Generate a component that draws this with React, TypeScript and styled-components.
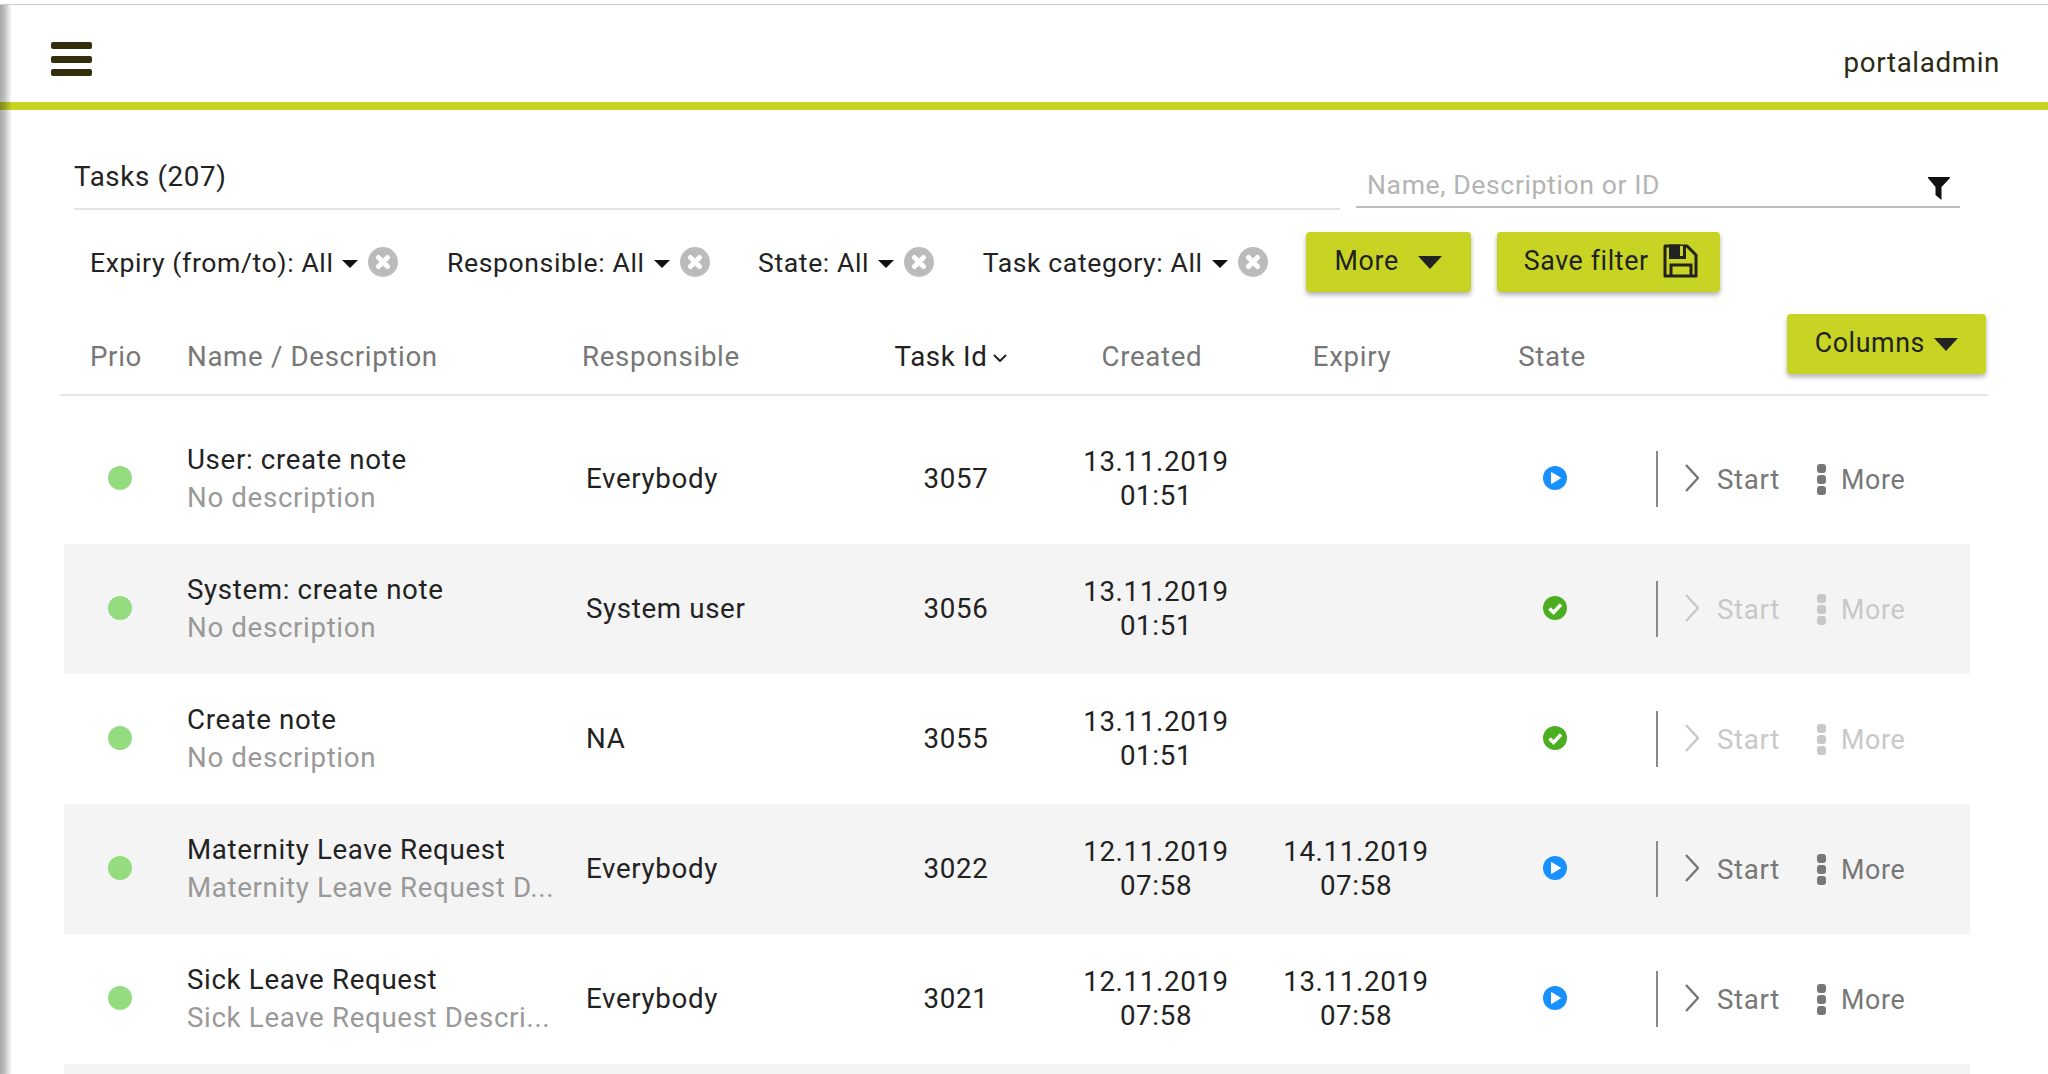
import styled, { createGlobalStyle } from "styled-components"

const GlobalStyle = createGlobalStyle`
  html, body {
    margin: 0;
    padding: 0;
    background: #fff;
    font-family: Roboto, "Liberation Sans", sans-serif;
    color: #222;
  }
`

const Page = styled.div`
  position: relative;
  height: 1074px;
  overflow: hidden;
  &::before {
    content: "";
    position: absolute;
    top: 5px;
    bottom: 0;
    left: 0;
    width: 12px;
    background: linear-gradient(90deg, rgba(0, 0, 0, 0.34), rgba(0, 0, 0, 0.26) 35%, rgba(0, 0, 0, 0));
  }
`

const Header = styled.header`
  display: flex;
  align-items: center;
  justify-content: space-between;
  box-sizing: border-box;
  height: 106px;
  margin-top: 4px;
  padding: 0 48px 0 51px;
  border-top: 1px solid #ccc;
  border-bottom: 8px solid #c8d424;
`

const Burger = styled.div`
  display: flex;
  flex-direction: column;
  gap: 6.5px;
  width: 41px;
  margin-top: 11px;
  span {
    height: 7px;
    border-radius: 2px;
    background: #332f0d;
  }
`

const UserName = styled.div`
  margin-top: 17px;
  font-size: 27.7px;
  letter-spacing: 0.65px;
  color: #2b2a12;
`

const TitleRow = styled.div`
  display: flex;
  gap: 16px;
  margin: 40px 88px 0 74px;
`

const Title = styled.div`
  flex: 1;
  box-sizing: border-box;
  height: 60px;
  font-size: 27.7px;
  line-height: 54px;
  letter-spacing: 0.65px;
  border-bottom: 2px solid #e4e4e4;
`

const Search = styled.div`
  display: flex;
  justify-content: space-between;
  box-sizing: border-box;
  width: 604px;
  height: 58px;
  padding: 20px 10px 0 11px;
  border-bottom: 2px solid #bbb;
  font-size: 26.6px;
  line-height: 30px;
  letter-spacing: 0.6px;
  color: #b4b4b4;
  svg {
    margin-top: 7px;
  }
`

const FilterBar = styled.div`
  display: flex;
  align-items: center;
  height: 60px;
  margin: 22px 0 0 90px;
`

const FilterList = styled.div`
  display: flex;
  align-items: center;
  gap: 48.5px;
  margin-right: 38px;
`

const Filter = styled.div`
  display: flex;
  align-items: center;
  font-size: 26.6px;
  letter-spacing: 0.6px;
`

const SmallCaret = styled.span`
  width: 0;
  height: 0;
  margin: 3px 10px 0 9px;
  border-left: 8px solid transparent;
  border-right: 8px solid transparent;
  border-top: 8px solid #111;
`

const Button = styled.button<{ $gap: number; $pad: number }>`
  display: inline-flex;
  align-items: center;
  gap: ${p => p.$gap}px;
  box-sizing: border-box;
  height: 60px;
  padding: 0 ${p => p.$pad}px 3px;
  border: 0;
  border-radius: 4px;
  background: #c8d424;
  box-shadow: 0 3px 5px rgba(0, 0, 0, 0.3);
  font: inherit;
  font-size: 26.8px;
  letter-spacing: 0.6px;
  color: #222;
`

const ButtonCaret = styled.span`
  width: 0;
  height: 0;
  margin-top: 4px;
  border-left: 12px solid transparent;
  border-right: 12px solid transparent;
  border-top: 13px solid #222;
`

const SaveButton = styled(Button)`
  margin-left: 26px;
  padding-right: 22px;
`

const Table = styled.div`
  margin: 22px 60px 0;
`

const HeadRow = styled.div`
  display: grid;
  grid-template-columns: 127px 395px 269px 200px 200px 200px 200px 1fr;
  box-sizing: border-box;
  height: 82px;
  border-bottom: 2px solid #e6e6e6;
`

const HeadCell = styled.div<{ $center?: boolean; $active?: boolean; $pad?: number }>`
  padding-top: 28px;
  padding-left: ${p => p.$pad ?? 0}px;
  font-size: 27.7px;
  line-height: 30px;
  letter-spacing: 0.65px;
  text-align: ${p => (p.$center ? "center" : "left")};
  color: ${p => (p.$active ? "#222" : "#777")};
  svg {
    margin-left: 6px;
    vertical-align: 4px;
  }
`

const ColumnsCell = styled.div`
  display: flex;
  justify-content: flex-end;
  padding-right: 2px;
`

const Rows = styled.div`
  width: 1906px;
  margin: 18px 0 0 4px;
`

const Row = styled.div<{ $striped: boolean }>`
  display: grid;
  grid-template-columns: 123px 399px 269px 200px 200px 200px 200px 1fr;
  align-items: center;
  height: 130px;
  background: ${p => (p.$striped ? "#f4f4f4" : "#fff")};
  font-size: 27.7px;
  letter-spacing: 0.65px;
`

const PrioDot = styled.span`
  display: block;
  width: 24px;
  height: 24px;
  margin: -2px 0 0 44px;
  border-radius: 50%;
  background: #95dc80;
`

const NameCell = styled.div`
  min-width: 0;
  line-height: 38px;
`

const RowName = styled.div`
  white-space: nowrap;
`

const RowDesc = styled.div`
  white-space: nowrap;
  color: #999;
`

const RespCell = styled.div`
  margin-top: -2px;
`

const CenterCell = styled.div`
  display: flex;
  justify-content: center;
  padding-left: 2px;
  text-align: center;
  line-height: 34px;
`

const StateCell = styled(CenterCell)`
  padding-left: 0;
  svg {
    margin-top: -2px;
  }
`

const Actions = styled.div<{ $disabled: boolean }>`
  display: flex;
  align-items: center;
  height: 56px;
  margin-left: 1px;
  padding-left: 27px;
  border-left: 2px solid #8a8a8a;
  color: ${p => (p.$disabled ? "#c8c8c8" : "#777")};
  > svg {
    margin-top: -3px;
  }
`

const ActionLabel = styled.span`
  margin-left: 18px;
  margin-right: 37px;
`

const MoreLabel = styled.span`
  margin-left: 15px;
  padding-top: 2px;
  font-size: 26.8px;
`

const Dots = styled.div`
  display: flex;
  flex-direction: column;
  gap: 2px;
  span {
    width: 9px;
    height: 9px;
    border-radius: 3px;
    background: currentColor;
  }
`

const CloseIcon = () => (
  <svg width="30" height="30" viewBox="0 0 30 30">
    <circle cx="15" cy="15" r="15" fill="#bbb" />
    <path d="M10.5 10.5l9 9M19.5 10.5l-9 9" stroke="#fff" strokeWidth="5" strokeLinecap="round" />
  </svg>
)

const FunnelIcon = () => (
  <svg width="22" height="23" viewBox="0 0 22 23">
    <path d="M0 0h22v1l-8.5 9v13l-6-5V10L0 1z" fill="#111" />
  </svg>
)

const SaveIcon = () => (
  <svg width="35" height="34" viewBox="0 0 35 34" fill="none" stroke="#222" strokeWidth="3">
    <path d="M2 2h22l9 9v21H2z" strokeLinejoin="round" />
    <path d="M7.5 2v11.5h14V2" fill="#c8d424" />
    <path d="M7.5 2h8v11.5h-8z" fill="#222" />
    <path d="M8 32V21h20v11" />
  </svg>
)

const SortIcon = () => (
  <svg width="14" height="8" viewBox="0 0 14 8" fill="none">
    <path d="M1 1l6 6 6-6" stroke="#222" strokeWidth="2" />
  </svg>
)

const StateIcon = ({ state }: { state: string }) =>
  state === "running" ? (
    <svg width="24" height="24" viewBox="0 0 24 24">
      <circle cx="12" cy="12" r="12" fill="#1890ff" />
      <path d="M8.5 6.5L17.5 12l-9 5.5z" fill="#fff" stroke="#fff" strokeLinejoin="round" />
    </svg>
  ) : (
    <svg width="24" height="24" viewBox="0 0 24 24">
      <circle cx="12" cy="12" r="12" fill="#4bae20" />
      <path d="M6.5 12.5l4 4 7.5-8" fill="none" stroke="#fff" strokeWidth="3.4" />
    </svg>
  )

const Chevron = () => (
  <svg width="14" height="28" viewBox="0 0 14 28" fill="none">
    <path d="M1 1l12 13L1 27" stroke="currentColor" strokeWidth="2.4" />
  </svg>
)

const filters = ["Expiry (from/to): All", "Responsible: All", "State: All", "Task category: All"]

const tasks = [
  { name: "User: create note", desc: "No description", resp: "Everybody", id: "3057", created: ["13.11.2019", "01:51"], expiry: null, state: "running" },
  { name: "System: create note", desc: "No description", resp: "System user", id: "3056", created: ["13.11.2019", "01:51"], expiry: null, state: "done" },
  { name: "Create note", desc: "No description", resp: "NA", id: "3055", created: ["13.11.2019", "01:51"], expiry: null, state: "done" },
  { name: "Maternity Leave Request", desc: "Maternity Leave Request D...", resp: "Everybody", id: "3022", created: ["12.11.2019", "07:58"], expiry: ["14.11.2019", "07:58"], state: "running" },
  { name: "Sick Leave Request", desc: "Sick Leave Request Descri...", resp: "Everybody", id: "3021", created: ["12.11.2019", "07:58"], expiry: ["13.11.2019", "07:58"], state: "running" },
]

export default function App() {
  return (
    <Page>
      <GlobalStyle />
      <Header>
        <Burger>
          <span />
          <span />
          <span />
        </Burger>
        <UserName>portaladmin</UserName>
      </Header>

      <TitleRow>
        <Title>Tasks (207)</Title>
        <Search>
          <span>Name, Description or ID</span>
          <FunnelIcon />
        </Search>
      </TitleRow>

      <FilterBar>
        <FilterList>
          {filters.map(f => (
            <Filter key={f}>
              {f}
              <SmallCaret />
              <CloseIcon />
            </Filter>
          ))}
        </FilterList>
        <Button $gap={19} $pad={29}>
          More
          <ButtonCaret />
        </Button>
        <SaveButton $gap={14} $pad={27}>
          Save filter
          <SaveIcon />
        </SaveButton>
      </FilterBar>

      <Table>
        <HeadRow>
          <HeadCell $pad={30}>Prio</HeadCell>
          <HeadCell>Name / Description</HeadCell>
          <HeadCell>Responsible</HeadCell>
          <HeadCell $center $active>
            Task Id
            <SortIcon />
          </HeadCell>
          <HeadCell $center $pad={2}>Created</HeadCell>
          <HeadCell $center $pad={2}>Expiry</HeadCell>
          <HeadCell $center $pad={2}>State</HeadCell>
          <ColumnsCell>
            <Button $gap={9} $pad={28}>
              Columns
              <ButtonCaret />
            </Button>
          </ColumnsCell>
        </HeadRow>

        <Rows>
          {tasks.map((t, i) => (
            <Row key={t.id} $striped={i % 2 === 1}>
              <PrioDot />
              <NameCell>
                <RowName>{t.name}</RowName>
                <RowDesc>{t.desc}</RowDesc>
              </NameCell>
              <RespCell>{t.resp}</RespCell>
              <CenterCell>{t.id}</CenterCell>
              <CenterCell>
                <div>
                  {t.created[0]}
                  <br />
                  {t.created[1]}
                </div>
              </CenterCell>
              <CenterCell>
                {t.expiry && (
                  <div>
                    {t.expiry[0]}
                    <br />
                    {t.expiry[1]}
                  </div>
                )}
              </CenterCell>
              <StateCell>
                <StateIcon state={t.state} />
              </StateCell>
              <Actions $disabled={t.state === "done"}>
                <Chevron />
                <ActionLabel>Start</ActionLabel>
                <Dots>
                  <span />
                  <span />
                  <span />
                </Dots>
                <MoreLabel>More</MoreLabel>
              </Actions>
            </Row>
          ))}
          <Row $striped />
        </Rows>
      </Table>
    </Page>
  )
}
